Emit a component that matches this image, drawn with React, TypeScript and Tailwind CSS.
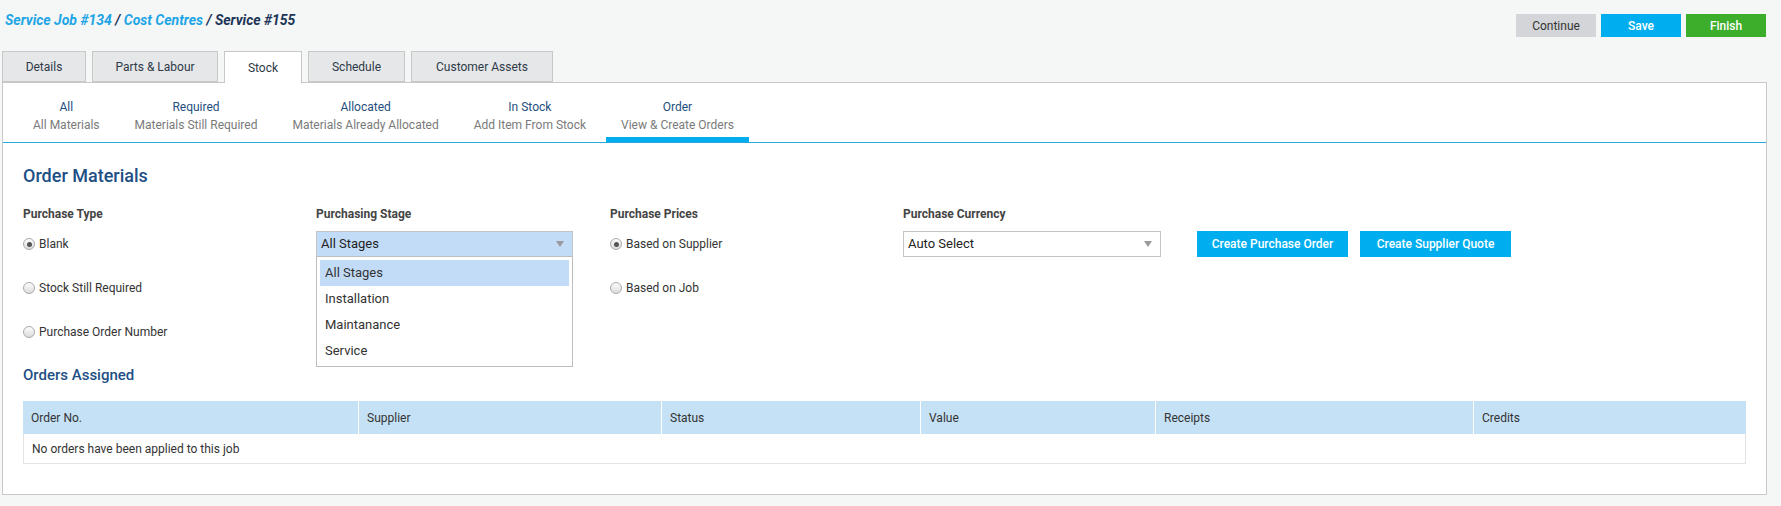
import React from "react";

const tabs = [
  { label: "Details", w: "w-[84px]" },
  { label: "Parts & Labour", w: "w-[126px]" },
  { label: "Stock", w: "w-[78px]", active: true },
  { label: "Schedule", w: "w-[97px]" },
  { label: "Customer Assets", w: "w-[142px]" },
];

const subTabs = [
  { t: "All", s: "All Materials" },
  { t: "Required", s: "Materials Still Required" },
  { t: "Allocated", s: "Materials Already Allocated" },
  { t: "In Stock", s: "Add Item From Stock" },
  { t: "Order", s: "View & Create Orders", active: true },
];

function Radio({ checked, label }: { checked?: boolean; label: string }) {
  return (
    <div className="flex h-[26px] items-center gap-[4px]">
      <span className="flex h-[12px] w-[12px] items-center justify-center rounded-full border border-[#a9a9a9] bg-gradient-to-b from-[#fdfdfd] to-[#dcdcdc]">
        {checked && <span className="h-[5px] w-[5px] rounded-full bg-[#555]" />}
      </span>
      <span className="text-[12px] text-[#333]">{label}</span>
    </div>
  );
}

function Arrow() {
  return (
    <svg width="8" height="6" viewBox="0 0 8 6" className="mr-[8px]">
      <path d="M0 0 L8 0 L4 6 Z" fill="#9a9a9a" />
    </svg>
  );
}

export default function App() {
  const cols = [
    { h: "Order No.", w: "w-[335px]" },
    { h: "Supplier", w: "w-[303px]" },
    { h: "Status", w: "w-[259px]" },
    { h: "Value", w: "w-[235px]" },
    { h: "Receipts", w: "w-[318px]" },
    { h: "Credits", w: "flex-1" },
  ];
  return (
    <div className="h-[506px] w-full overflow-hidden bg-[#f5f6f6] font-['Roboto',sans-serif]">
      {/* header */}
      <div className="flex h-[51px] items-start justify-between">
        <div className="pl-[5px] pt-[10px] text-[14px] font-bold italic leading-[20px]">
          <span className="text-[#1ea5e6]">Service Job #134</span>
          <span className="text-[#1c3557]"> / </span>
          <span className="text-[#1ea5e6]">Cost Centres</span>
          <span className="text-[#1c3557]"> / Service #155</span>
        </div>
        <div className="mr-[15px] mt-[14px] flex gap-[5px]">
          <button className="h-[23px] w-[80px] bg-[#d3d5d8] text-[12px] text-[#333]">Continue</button>
          <button className="h-[23px] w-[80px] bg-[#00aeef] text-[12px] font-medium text-white">Save</button>
          <button className="h-[23px] w-[80px] bg-[#3dae2b] text-[12px] font-medium text-white">Finish</button>
        </div>
      </div>

      {/* tabs */}
      <div className="relative z-10 ml-[2px] flex h-[31px] gap-[6px]">
        {tabs.map((t) => (
          <div
            key={t.label}
            className={`${t.w} flex items-center justify-center border border-[#c8c8c8] text-[12px] text-[#2e3a48] ${
              t.active ? "h-[32px] border-b-0 bg-white" : "h-[31px] bg-[#e6e7e9]"
            }`}
          >
            {t.label}
          </div>
        ))}
      </div>

      {/* panel */}
      <div className="ml-[2px] mr-[14px] h-[413px] border border-[#c8c8c8] bg-white">
        {/* subtabs */}
        <div className="flex gap-[5px] border-b border-[#29a8e0] pl-[15px]">
          {subTabs.map((s) => (
            <div
              key={s.t}
              className={`flex flex-col items-center px-[15px] pt-[15px] text-[12px] leading-[18px] ${
                s.active ? "border-b-[5px] border-[#00aeef] pb-[3px]" : "pb-[8px]"
              }`}
            >
              <span className="text-[#1f4f80]">{s.t}</span>
              <span className="text-[#7a7a7a]">{s.s}</span>
            </div>
          ))}
        </div>

        <div className="px-[20px] pt-[21px]">
          <h2 className="text-[18px] font-medium leading-[24px] text-[#1e4f85]">Order Materials</h2>

          <div className="mt-[18px] grid grid-cols-[293px_294px_293px_294px_auto]">
            <div className="text-[12px] font-bold leading-[16px] text-[#444]">Purchase Type</div>
            <div className="text-[12px] font-bold leading-[16px] text-[#444]">Purchasing Stage</div>
            <div className="text-[12px] font-bold leading-[16px] text-[#444]">Purchase Prices</div>
            <div className="text-[12px] font-bold leading-[16px] text-[#444]">Purchase Currency</div>
            <div />

            <div className="mt-[9px] flex flex-col gap-[18px]">
              <Radio checked label="Blank" />
              <Radio label="Stock Still Required" />
              <Radio label="Purchase Order Number" />
            </div>

            <div className="relative mt-[9px]">
              <div className="flex h-[26px] w-[257px] items-center justify-between border border-[#c4c4c4] bg-[#c2dcf8] pl-[4px] text-[13px] text-[#222]">
                <span>All Stages</span>
                <Arrow />
              </div>
              <div className="absolute left-0 top-[25px] z-20 w-[257px] border border-[#bdbdbd] bg-white px-[3px] pb-[2px] pt-[3px] text-[13px] text-[#333]">
                <div className="flex h-[26px] items-center bg-[#c2dcf8] pl-[5px]">All Stages</div>
                <div className="flex h-[26px] items-center pl-[5px]">Installation</div>
                <div className="flex h-[26px] items-center pl-[5px]">Maintanance</div>
                <div className="flex h-[26px] items-center pl-[5px]">Service</div>
              </div>
            </div>

            <div className="mt-[9px] flex flex-col gap-[18px]">
              <Radio checked label="Based on Supplier" />
              <Radio label="Based on Job" />
            </div>

            <div className="mt-[9px]">
              <div className="flex h-[26px] w-[258px] items-center justify-between border border-[#c4c4c4] bg-white pl-[4px] text-[13px] text-[#222]">
                <span>Auto Select</span>
                <Arrow />
              </div>
            </div>

            <div className="mt-[9px] flex items-start gap-[12px]">
              <button className="h-[26px] w-[151px] bg-[#00aeef] text-[12px] font-medium text-white">Create Purchase Order</button>
              <button className="h-[26px] w-[151px] bg-[#00aeef] text-[12px] font-medium text-white">Create Supplier Quote</button>
            </div>
          </div>

          <h3 className="mt-[20px] text-[15px] font-medium leading-[20px] text-[#1e4f85]">Orders Assigned</h3>

          <div className="mt-[16px]">
            <div className="flex h-[33px] bg-[#c5e1f5]">
              {cols.map((c, i) => (
                <div
                  key={c.h}
                  className={`${c.w} flex items-center pl-[8px] text-[12px] text-[#333] ${i > 0 ? "border-l border-white" : ""}`}
                >
                  {c.h}
                </div>
              ))}
            </div>
            <div className="flex h-[30px] items-center border border-t-0 border-[#e3e3e3] pl-[8px] text-[12px] text-[#333]">
              No orders have been applied to this job
            </div>
          </div>
        </div>
      </div>
    </div>
  );
}
